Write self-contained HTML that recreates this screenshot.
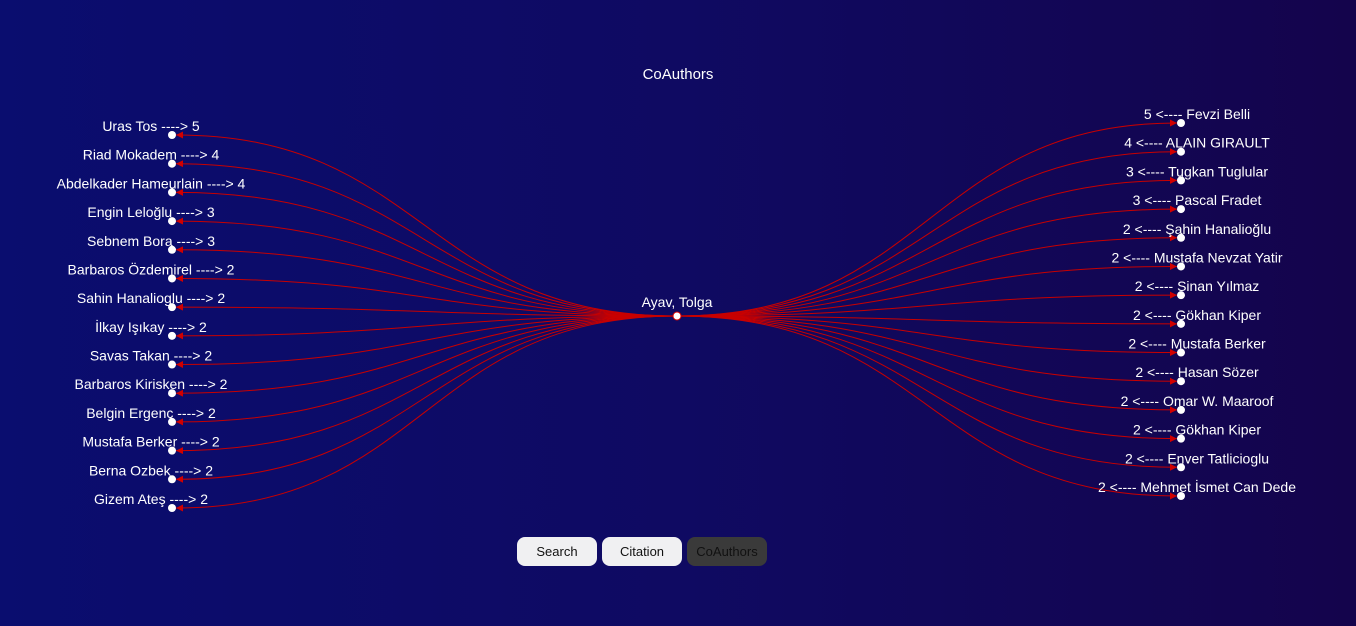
<!DOCTYPE html>
<html><head><meta charset="utf-8"><style>
html,body{margin:0;padding:0;width:1356px;height:626px;overflow:hidden;background:linear-gradient(to right,#0a0d6f,#0f0a62 50%,#14044c);font-family:"Liberation Sans",Arial,sans-serif;}
svg{position:absolute;left:0;top:0}
text{fill:#fff;font-size:14px;text-anchor:middle;font-family:"Liberation Sans",Arial,sans-serif}
.btn{position:absolute;top:537px;height:29px;width:80px;border-radius:8px;font-size:13px;display:flex;align-items:center;justify-content:center;}
</style></head><body>
<svg id="s" width="1356" height="626"></svg>
<div class="btn" style="left:517px;background:#f0f0f2;color:#111">Search</div>
<div class="btn" style="left:602px;background:#f0f0f2;color:#111">Citation</div>
<div class="btn" style="left:687px;background:#3a3a3a;color:#111">CoAuthors</div>
<script>
var L=["Uras Tos ----> 5","Riad Mokadem ----> 4","Abdelkader Hameurlain ----> 4","Engin Leloğlu ----> 3","Sebnem Bora ----> 3","Barbaros Özdemirel ----> 2","Sahin Hanalioglu ----> 2","İlkay Işıkay ----> 2","Savas Takan ----> 2","Barbaros Kirisken ----> 2","Belgin Ergenç ----> 2","Mustafa Berker ----> 2","Berna Ozbek ----> 2","Gizem Ateş ----> 2"];
var R=["5 <---- Fevzi Belli","4 <---- ALAIN GIRAULT","3 <---- Tugkan Tuglular","3 <---- Pascal Fradet","2 <---- Şahin Hanalioğlu","2 <---- Mustafa Nevzat Yatir","2 <---- Sinan Yılmaz","2 <---- Gökhan Kiper","2 <---- Mustafa Berker","2 <---- Hasan Sözer","2 <---- Omar W. Maaroof","2 <---- Gökhan Kiper","2 <---- Enver Tatlicioglu","2 <---- Mehmet İsmet Can Dede"];
var cx=677,cy=316,h='<defs><marker id="a" viewBox="0 0 10 10" refX="10" refY="5" markerWidth="7" markerHeight="7" orient="auto"><path d="M0,0L10,5L0,10z" fill="#d00000"/></marker></defs>';
h+='<text x="678" y="79" style="font-size:15px">CoAuthors</text>';
var s=(508-135)/13;
function side(arr,x,y0,tx){arr.forEach(function(t,i){var y=y0+i*s,m=(cx+x)/2,ex=x+(x<cx?4:-4);
h+='<path d="M'+cx+','+cy+'C'+m+','+cy+' '+m+','+y+' '+ex+','+y+'" fill="none" stroke="#c80000" stroke-width="1" marker-end="url(#a)"/>';
h+='<circle cx="'+x+'" cy="'+y+'" r="4" fill="#fff"/><text x="'+(x+tx)+'" y="'+(y-4)+'">'+t+'</text>';});}
side(L,172,135,-21);side(R,1181,123,16);
h+='<circle cx="677" cy="316" r="4" fill="#fff" stroke="#d40000" stroke-width="1"/><text x="677" y="307">Ayav, Tolga</text>';
document.getElementById('s').innerHTML=h;
</script>
</body></html>
